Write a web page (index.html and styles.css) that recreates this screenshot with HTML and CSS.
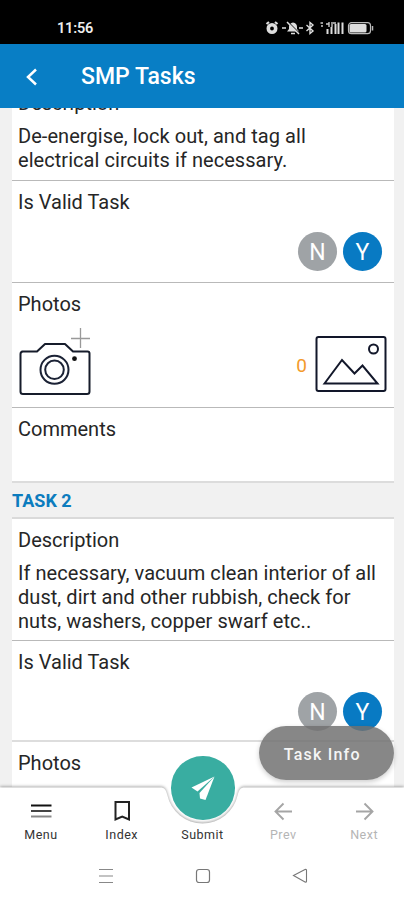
FILE: index.html
```html
<!DOCTYPE html>
<html lang="en">
<head>
<meta charset="utf-8">
<title>SMP Tasks</title>
<link rel="stylesheet" href="styles.css">
</head>
<body>
<div class="screen">
  <div class="status">
    <span class="clock">11:56</span>
    <svg class="status-icons" width="110" height="16" viewBox="0 0 110 16">
      <g fill="none" stroke="#ddd" stroke-width="1.4">
        <circle cx="7" cy="8.500" r="3.700" stroke-width="3.600"/>
        <path d="M1.500 4 4 2M12.500 4 10 2" stroke-width="2.200"/>
        <path d="M41.500 5l6.500 6-3 2.500v-11l3 2.500-6.500 6"/>
      </g>
      <path d="M22 11.500 24 9V6.500Q24.500 3 28 2.500 32 3 32 7V9l2 2.500Z" fill="#ddd"/>
      <path d="M26 13.500h4" stroke="#ddd" stroke-width="1.500"/>
      <path d="M23 2 35 14" stroke="#000" stroke-width="1.200"/>
      <path d="M22 2 34 14M17 8h4M34 8h4" stroke="#ddd" stroke-width="1.500"/>
      <path d="M55.500 3h2.500M56 6h2M61 4h3M64 2v5M67 2v5M68 3h3" stroke="#ccc" stroke-width="1.400"/>
      <path d="M62.500 9v5M66.500 7v7M70.500 4v10M73.500 2.500v11.500M77.500 2.500v11.500" stroke="#ddd" stroke-width="2"/>
      <rect x="83.500" y="2.700" width="22" height="11" rx="3" fill="none" stroke="#bbb" stroke-width="1.200"/>
      <rect x="84.500" y="4" width="17" height="8.500" rx="1.500" fill="#ddd"/>
      <path d="M107.500 6v4.500" stroke="#bbb" stroke-width="1.500"/>
    </svg>
  </div>

  <header class="appbar">
    <svg width="14" height="20" viewBox="0 0 14 20"><path d="M11 2.500 3 10l8 7.500" fill="none" stroke="#fff" stroke-width="2.500"/></svg>
    <h1>SMP Tasks</h1>
  </header>

  <main class="content">
    <section class="card scrolled">
      <div class="row first">
        <div class="label">Description</div>
        <p class="text">De-energise, lock out, and tag all<br>electrical circuits if necessary.</p>
      </div>
      <div class="row valid">
        <div class="label">Is Valid Task</div>
        <div class="choices"><span class="choice no">N</span><span class="choice yes">Y</span></div>
      </div>
      <div class="row photos">
        <div class="label">Photos</div>
        <div class="media">
          <svg width="74" height="70" viewBox="0 0 74 70" fill="none">
            <path d="M4 25.500h15l8-7.500h20l8 7.500h14.500q2 0 2 2v38q0 2.500-2.500 2.500H5q-2.500 0-2.500-2.500V28q0-2.500 2.500-2.500Z" stroke="#161c2b" stroke-width="2" stroke-linejoin="round"/>
            <circle cx="36.500" cy="43.800" r="14" stroke="#1b2235" stroke-width="2"/>
            <circle cx="36.500" cy="43.800" r="9.300" stroke="#1b2235" stroke-width="2"/>
            <circle cx="56.500" cy="32.700" r="2.400" fill="#111"/>
            <path d="M53 12.500h19M62.500 2v20" stroke="#999" stroke-width="1.300"/>
          </svg>
          <div class="gallery">
            <span class="count">0</span>
            <svg width="72" height="58" viewBox="0 0 72 58" fill="none" stroke="#12172a" stroke-width="2">
              <rect x="1.500" y="2" width="69" height="54" rx="2"/>
              <circle cx="58.500" cy="14" r="4.500"/>
              <path d="M9.500 48.500 27 25l12.500 13.500 8-8L62.500 48.500Z"/>
            </svg>
          </div>
        </div>
      </div>
      <div class="row comments">
        <div class="label">Comments</div>
      </div>
    </section>

    <h2 class="section-title">TASK 2</h2>

    <section class="card second">
      <div class="row">
        <div class="label">Description</div>
        <p class="text">If necessary, vacuum clean interior of all<br>dust, dirt and other rubbish, check for<br>nuts, washers, copper swarf etc..</p>
      </div>
      <div class="row valid short">
        <div class="label">Is Valid Task</div>
        <div class="choices"><span class="choice no">N</span><span class="choice yes">Y</span></div>
      </div>
      <div class="row photos">
        <div class="label">Photos</div>
      </div>
    </section>
  </main>

  <button class="task-info">Task Info</button>

  <nav class="tabs">
    <svg class="tabs-shape" width="404" height="120" viewBox="0 0 404 120">
      <path d="M0 7.500H160C165 7.500 166 10 167.300 15A36 36 0 0 0 237.700 15C239 10 240 7.500 245 7.500H404V120H0Z" fill="#fff"/>
    </svg>
    <div class="tab">
      <svg width="24" height="24" viewBox="0 0 24 24"><path d="M2 6.500h20.500" stroke="#111" stroke-width="2"/><path d="M2 12h20.500" stroke="#444" stroke-width="2"/><path d="M2 17.500h20.500" stroke="#888" stroke-width="2"/></svg>
      <span>Menu</span>
    </div>
    <div class="tab">
      <svg width="24" height="24" viewBox="0 0 24 24"><path d="M5.500 3H19v17.500L12.200 17.500 5.500 20.500Z" fill="none" stroke="#222" stroke-width="2"/></svg>
      <span>Index</span>
    </div>
    <div class="tab"><span>Submit</span></div>
    <div class="tab off">
      <svg width="24" height="24" viewBox="0 0 24 24"><path d="M21 12.500H5M12.500 4.500l-8 8 8 8" fill="none" stroke="#a5a5a5" stroke-width="1.900"/></svg>
      <span>Prev</span>
    </div>
    <div class="tab off">
      <svg width="24" height="24" viewBox="0 0 24 24"><path d="M4 12.500h16M12.500 4.500l8 8-8 8" fill="none" stroke="#a5a5a5" stroke-width="1.900"/></svg>
      <span>Next</span>
    </div>
    <div class="fab">
      <svg width="26" height="26" viewBox="0 0 26 26" fill="#fff"><path d="M24.500 1.500 1.500 12.500 7.500 16.500Z"/><path d="M24.500 1.500 9.500 18 10 23.500 15.500 25Z"/></svg>
    </div>
  </nav>

  <div class="system">
    <svg width="16" height="16" viewBox="0 0 16 16"><path d="M1 1.500h14M1 8h14M1 14.500h14" stroke="#888" stroke-width="1.200"/></svg>
    <svg width="16" height="16" viewBox="0 0 16 16"><rect x="1.500" y="1.500" width="13" height="13" rx="2.500" fill="none" stroke="#777" stroke-width="1.200"/></svg>
    <svg width="16" height="16" viewBox="0 0 16 16"><path d="M1.500 7.500 13 1.500Q14.500 1 14.500 2.500v10.500q0 1.500-1.500 1Z" fill="none" stroke="#777" stroke-width="1.100"/></svg>
  </div>
</div>
</body>
</html>
```

FILE: styles.css
```css
* { box-sizing: border-box; }
body { margin: 0; font-family: Roboto, "Liberation Sans", sans-serif; color: #262626; }
h1, h2, p { margin: 0; font-weight: 400; }
svg { display: block; flex: none; }

.screen {
  position: relative;
  width: 404px;
  height: 900px;
  overflow: hidden;
  display: flex;
  flex-direction: column;
  background: #fff;
}

.status {
  height: 44px;
  flex: none;
  background: #000;
  display: flex;
  justify-content: space-between;
  padding: 20px 29px 0 57px;
}
.clock { color: #eee; font-size: 14.5px; font-weight: 600; line-height: 17px; letter-spacing: -0.2px; }

.appbar {
  height: 63.500px;
  flex: none;
  background: #087ec5;
  display: flex;
  align-items: center;
  padding: 2px 0 0 25px;
  gap: 42px;
}
.appbar h1 { color: #fff; font-size: 23px; font-weight: 500; line-height: 30px; letter-spacing: 0; padding-top: 1px; }

.content {
  height: 679.500px;
  flex: none;
  overflow: hidden;
  background: #f1f1f1;
  padding: 0 10px 0 12px;
}
.card { background: #fff; border-bottom: 2px solid #dcdcdc; }
.card.scrolled { margin-top: -26px; }
.card.second { border-top: 2px solid #dadada; }
.row { padding: 9px 6px 6.500px; border-bottom: 1px solid #b9b9b9; }
.row.first { padding-bottom: 8.500px; }
.row:last-child { border-bottom: 0; }
.label, .text { font-size: 20px; line-height: 24px; white-space: nowrap; letter-spacing: 0; }
.text { margin-top: 9px; letter-spacing: 0.050px; }

.valid { height: 102px; }
.valid.short { height: 101.500px; border-bottom: 2px solid #ddd; }
.choices { display: flex; justify-content: flex-end; gap: 6px; padding: 18px 6px 0 0; }
.choice {
  width: 39px;
  height: 39px;
  border-radius: 50%;
  color: #fff;
  font-size: 23px;
  line-height: 41px;
  text-align: center;
}
.choice.no { background: #9fa3a6; }
.choice.yes { background: #087ac3; }

.photos { height: 125px; }
.media { display: flex; justify-content: space-between; align-items: flex-start; padding-top: 10px; }
.gallery { display: flex; align-items: center; gap: 8px; padding-top: 9px; margin-right: 1px; }
.count { color: #f39a2b; font-size: 19px; line-height: 24px; padding-top: 3px; }
.comments { height: 72.500px; }

.section-title {
  height: 34.500px;
  color: #0c7cbe;
  font-size: 18px;
  font-weight: 700;
  line-height: 35px;
}

.task-info {
  position: absolute;
  left: 259px;
  top: 726px;
  width: 134.500px;
  height: 54px;
  border: 0;
  border-radius: 27px;
  background: rgba(112, 112, 112, 0.84);
  box-shadow: 0 2px 5px rgba(0, 0, 0, 0.2);
  color: #f5f5f5;
  font: 500 16px/20px Roboto, "Liberation Sans", sans-serif;
  letter-spacing: 1.200px;
  padding: 3px 8px 0 0;
}

.tabs {
  position: relative;
  height: 63px;
  flex: none;
  display: grid;
  grid-template-columns: repeat(5, 1fr);
}
.tabs-shape {
  position: absolute;
  left: 0;
  top: -7px;
  overflow: visible;
  filter: drop-shadow(0 -1px 1.500px rgba(0, 0, 0, 0.35));
}
.tab {
  position: relative;
  display: flex;
  flex-direction: column;
  align-items: center;
  justify-content: flex-end;
  gap: 4px;
  padding: 0 0 7px 1px;
  font-size: 12.500px;
  line-height: 16px;
  letter-spacing: 0.500px;
  color: #333;
}
.tab.off { color: #b5b5b5; }
.fab {
  position: absolute;
  left: 171px;
  top: -31px;
  width: 63.500px;
  height: 63.500px;
  border-radius: 50%;
  background: #39ada1;
  display: flex;
  align-items: center;
  justify-content: center;
}

.system {
  position: relative;
  flex: 1;
  display: flex;
  justify-content: center;
  gap: 81px;
  padding: 18px 0 0 1px;
  background: #fff;
}
```
